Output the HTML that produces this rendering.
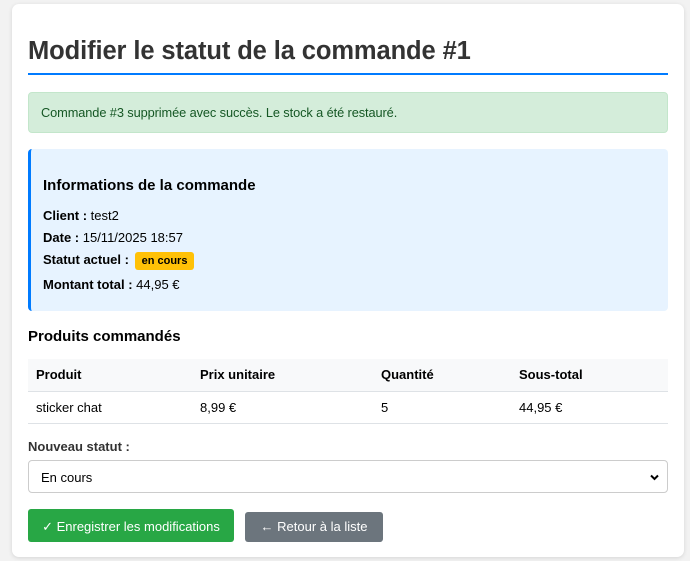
<!DOCTYPE html>
<html><head><meta charset="utf-8"><style>
*{box-sizing:border-box;margin:0;padding:0}
body{width:690px;height:561px;background:#f2f2f2;font-family:"Liberation Sans",Arial,sans-serif;color:#333;position:relative;overflow:hidden}
.card{position:absolute;left:12px;top:4px;width:672px;height:553px;background:#fff;border-radius:7px;box-shadow:0 1px 4px rgba(0,0,0,.12)}
.a{position:absolute}
h1{position:absolute;left:28px;top:37px;font-size:25.5px;font-weight:bold;color:#333;white-space:nowrap;letter-spacing:-0.1px}
.line{left:28px;top:73px;width:640px;height:2px;background:#007bff}
.alert{left:28px;top:92px;width:640px;height:41px;background:#d4edda;border:1px solid #c3e6cb;border-radius:4px;color:#155724;font-size:12.8px;padding:12px 12px;letter-spacing:-0.1px}
.info{left:28px;top:149px;width:640px;height:162px;background:#e7f3ff;border-left:3px solid #007bff;border-radius:4px}
.info h3{position:absolute;left:12px;top:28px;font-size:15px;color:#000}
.info p{position:absolute;left:12px;font-size:13px;color:#000;white-space:nowrap}
.badge{display:inline-block;background:#ffc107;color:#000;font-weight:bold;font-size:11px;padding:3px 7px;border-radius:3px;margin-left:2px}
h2{position:absolute;left:28px;top:328px;font-size:15px;color:#000}
table{position:absolute;left:28px;top:359px;width:640px;border-collapse:collapse;font-size:13px;color:#000}
th{background:#f8f9fa;text-align:left;height:32px;padding:0 8px;border-bottom:1px solid #dee2e6}
td{height:32px;padding:0 8px;border-bottom:1px solid #dee2e6}
.lab{left:28px;top:439px;font-size:13px;font-weight:bold;color:#333}
.sel{left:28px;top:460px;width:640px;height:33px;border:1px solid #ccc;border-radius:4px;font-size:13px;color:#000;padding:9px 12px}
.btn{color:#fff;font-size:13px;border-radius:3px;text-align:center}
</style></head><body>
<div class="card"></div>
<h1>Modifier le statut de la commande #1</h1>
<div class="a line"></div>
<div class="a alert">Commande #3 supprimée avec succès. Le stock a été restauré.</div>
<div class="a info">
<h3>Informations de la commande</h3>
<p style="top:59px"><b>Client :</b> test2</p>
<p style="top:81px"><b>Date :</b> 15/11/2025 18:57</p>
<p style="top:103px"><b>Statut actuel :</b> <span class="badge">en cours</span></p>
<p style="top:128px"><b>Montant total :</b> 44,95 €</p>
</div>
<h2>Produits commandés</h2>
<table><tr><th style="width:164px">Produit</th><th style="width:181px">Prix unitaire</th><th style="width:138px">Quantité</th><th>Sous-total</th></tr>
<tr><td>sticker chat</td><td>8,99 €</td><td>5</td><td>44,95 €</td></tr></table>
<div class="a lab">Nouveau statut :</div>
<div class="a sel">En cours<svg class="a" style="right:8px;top:13px" width="9" height="7" viewBox="0 0 9 7"><path d="M1 1.5L4.5 5 8 1.5" stroke="#000" stroke-width="2" fill="none"/></svg></div>
<div class="a btn" style="left:28px;top:509px;width:206px;height:33px;background:#28a745;padding-top:10px">✓ Enregistrer les modifications</div>
<div class="a btn" style="left:245px;top:512px;width:138px;height:30px;background:#6c757d;padding-top:7px">← Retour à la liste</div>
</body></html>
